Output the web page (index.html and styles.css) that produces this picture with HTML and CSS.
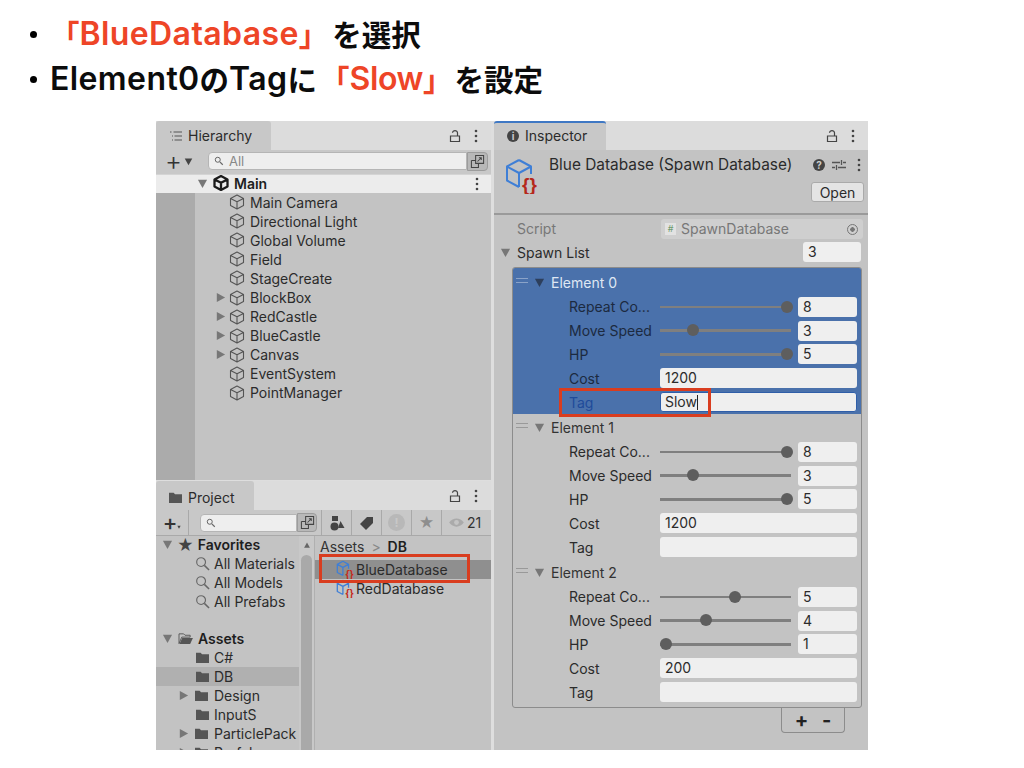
FILE: index.html
```html
<!DOCTYPE html>
<html lang="ja">
<head>
<meta charset="utf-8">
<title>Spawn Database</title>
<link rel="stylesheet" href="styles.css">
</head>
<body>
<svg class="defs" width="0" height="0" aria-hidden="true">
  <symbol id="cube" viewBox="0 0 16 16"><path d="M8 1 L14.5 4.4 V11.6 L8 15 L1.5 11.6 V4.4 Z M1.5 4.4 L8 7.8 L14.5 4.4 M8 7.8 V15" fill="none" stroke="currentColor" stroke-width="1.1" stroke-linejoin="round"/></symbol>
  <symbol id="cubebold" viewBox="0 0 16 16"><path d="M8 1 L14.5 4.4 V11.6 L8 15 L1.5 11.6 V4.4 Z M1.5 4.4 L8 7.8 L14.5 4.4 M8 7.8 V15" fill="none" stroke="currentColor" stroke-width="2.3" stroke-linejoin="round"/></symbol>
  <symbol id="folder" viewBox="0 0 16 14"><path d="M1 2 H6 L7.5 3.5 H15 V13 H1 Z" fill="currentColor"/></symbol>
  <symbol id="folderopen" viewBox="0 0 16 14"><path d="M1 2 H6 L7.5 3.5 H13 V5.5 H4 L1 12.5 Z" fill="none" stroke="currentColor"/><path d="M4.5 6.5 H16 L13 13 H1.5 Z" fill="currentColor"/></symbol>
  <symbol id="search" viewBox="0 0 16 16"><circle cx="6.5" cy="6.5" r="4.7" fill="none" stroke="currentColor" stroke-width="1.2"/><path d="M10 10 L15 15" stroke="currentColor" stroke-width="1.6"/></symbol>
  <symbol id="lock" viewBox="0 0 12 14"><path d="M1.5 7 H10.5 V12.5 H1.5 Z M8.5 7 V3.8 C8.5 1 3.5 1 3.5 3.8" fill="none" stroke="currentColor" stroke-width="1.2"/></symbol>
  <symbol id="dots" viewBox="0 0 4 14"><circle cx="2" cy="2" r="1.3" fill="currentColor"/><circle cx="2" cy="7" r="1.3" fill="currentColor"/><circle cx="2" cy="12" r="1.3" fill="currentColor"/></symbol>
  <symbol id="down" viewBox="0 0 12 12"><path d="M1 2 H11 L6 11 Z" fill="currentColor"/></symbol>
  <symbol id="right" viewBox="0 0 12 12"><path d="M2 1 L11 6 L2 11 Z" fill="currentColor"/></symbol>
  <symbol id="popout" viewBox="0 0 16 16"><path d="M6 1.5 H14.5 V10 H6 Z M1.5 7 H6 M1.5 7 V14.5 H9 V10 M8 8 L12 4 M9.5 4 H12 V6.5" fill="none" stroke="currentColor" stroke-width="1.1"/></symbol>
  <symbol id="minisearch" viewBox="0 0 12 12"><circle cx="4.5" cy="4.5" r="3" fill="none" stroke="currentColor" stroke-width="1.2"/><path d="M7 7 L10.5 10.5" stroke="currentColor" stroke-width="1.4"/></symbol>
  <symbol id="assetcube" viewBox="0 0 22 22"><path d="M8 1.5 L14.5 5 V10 M8 18 L1.5 14.5 V5 L8 1.5 M1.5 5 L8 8.6 L14.5 5 M8 8.6 V18" fill="none" stroke="#3f7fd6" stroke-width="1.5" stroke-linejoin="round"/></symbol>
</svg>

<ul class="bullets">
  <li class="bullet-first"><span class="accent"><span class="ja">「</span>BlueDatabase<span class="ja">」</span></span><span class="ja ja-after">を選択</span></li>
  <li class="bullet-second">Element0<span class="ja">の</span>Tag<span class="ja">に</span><span class="accent accent-slow"><span class="ja">「</span><span class="slow">Slow</span><span class="ja">」</span></span><span class="ja ja-set">を設定</span></li>
</ul>

<main class="window">
  <div class="col-left">
    <section class="pane hierarchy">
      <header class="tabstrip">
        <div class="tab tab-hier">
          <svg class="ic-list" viewBox="0 0 14 10"><path d="M1 1 H2.5 M4.5 1 H13 M3 5 H4 M5.5 5 H13 M3 9 H4 M5.5 9 H13" stroke="#555" fill="none"/></svg>
          <span>Hierarchy</span>
        </div>
        <div class="tab-actions"><svg class="ic-lock"><use href="#lock"/></svg><svg class="ic-dots"><use href="#dots"/></svg></div>
      </header>
      <div class="toolbar hier-toolbar">
        <span class="plus">+</span><svg class="ic-caret"><use href="#down"/></svg>
        <div class="searchbox"><svg class="ic-mini"><use href="#minisearch"/></svg><span class="search-text">All</span></div>
        <div class="popbtn"><svg class="ic-pop"><use href="#popout"/></svg></div>
      </div>
      <div class="scene-row">
        <svg class="arrow"><use href="#down"/></svg>
        <svg class="ic-cube ic-dark"><use href="#cubebold"/></svg>
        <b>Main</b>
        <svg class="ic-dots scene-dots"><use href="#dots"/></svg>
      </div>
      <div class="hier-body">
        <div class="gutter"></div>
        <ul class="hier-list">
          <li><svg class="ic-cube"><use href="#cube"/></svg>Main Camera</li>
          <li><svg class="ic-cube"><use href="#cube"/></svg>Directional Light</li>
          <li><svg class="ic-cube"><use href="#cube"/></svg>Global Volume</li>
          <li><svg class="ic-cube"><use href="#cube"/></svg>Field</li>
          <li><svg class="ic-cube"><use href="#cube"/></svg>StageCreate</li>
          <li class="has-kids"><svg class="arrow"><use href="#right"/></svg><svg class="ic-cube"><use href="#cube"/></svg>BlockBox</li>
          <li class="has-kids"><svg class="arrow"><use href="#right"/></svg><svg class="ic-cube"><use href="#cube"/></svg>RedCastle</li>
          <li class="has-kids"><svg class="arrow"><use href="#right"/></svg><svg class="ic-cube"><use href="#cube"/></svg>BlueCastle</li>
          <li class="has-kids"><svg class="arrow"><use href="#right"/></svg><svg class="ic-cube"><use href="#cube"/></svg>Canvas</li>
          <li><svg class="ic-cube"><use href="#cube"/></svg>EventSystem</li>
          <li><svg class="ic-cube"><use href="#cube"/></svg>PointManager</li>
        </ul>
      </div>
    </section>

    <section class="pane project">
      <header class="tabstrip">
        <div class="tab tab-proj"><svg class="ic-folder"><use href="#folder"/></svg><span>Project</span></div>
        <div class="tab-actions"><svg class="ic-lock"><use href="#lock"/></svg><svg class="ic-dots"><use href="#dots"/></svg></div>
      </header>
      <div class="toolbar proj-toolbar">
        <div class="tb-cell tb-plus"><span class="plus plus-small">+</span><svg class="ic-tiny"><use href="#down"/></svg></div>
        <div class="tb-search">
          <div class="searchbox"><svg class="ic-mini"><use href="#minisearch"/></svg></div>
          <div class="popbtn"><svg class="ic-pop"><use href="#popout"/></svg></div>
        </div>
        <div class="tb-cell"><svg class="ic-shapes" viewBox="0 0 16 16"><path d="M3 1 H9 V6 H3 Z" fill="#444"/><circle cx="5.5" cy="11.5" r="4" fill="#444"/><path d="M11.5 6 L15.5 13 H9 Z" fill="#444"/></svg></div>
        <div class="tb-cell"><svg class="ic-tag" viewBox="0 0 16 16"><path d="M1 9 L8 2 H14 V8 L7 15 Z" fill="#444"/></svg></div>
        <div class="tb-cell"><span class="warn">!</span></div>
        <div class="tb-cell"><span class="star">★</span></div>
        <div class="tb-count"><svg class="ic-eye" viewBox="0 0 18 12"><path d="M1 6 C5 0 13 0 17 6 C13 12 5 12 1 6 Z" fill="#aaa"/><circle cx="9" cy="6" r="2.6" fill="#c4c4c4"/></svg><span>21</span></div>
      </div>
      <div class="proj-body">
        <nav class="tree">
          <div class="tree-row lvl0"><svg class="arrow"><use href="#down"/></svg><span class="star star-dark">★</span><b>Favorites</b></div>
          <div class="tree-row lvl1"><svg class="ic-search"><use href="#search"/></svg>All Materials</div>
          <div class="tree-row lvl1"><svg class="ic-search"><use href="#search"/></svg>All Models</div>
          <div class="tree-row lvl1"><svg class="ic-search"><use href="#search"/></svg>All Prefabs</div>
          <div class="tree-row tree-gap"></div>
          <div class="tree-row lvl0"><svg class="arrow"><use href="#down"/></svg><svg class="ic-folder"><use href="#folderopen"/></svg><b>Assets</b></div>
          <div class="tree-row lvl1"><svg class="ic-folder"><use href="#folder"/></svg>C#</div>
          <div class="tree-row lvl1 selected"><svg class="ic-folder"><use href="#folder"/></svg>DB</div>
          <div class="tree-row lvl1 kids"><svg class="arrow"><use href="#right"/></svg><svg class="ic-folder"><use href="#folder"/></svg>Design</div>
          <div class="tree-row lvl1"><svg class="ic-folder"><use href="#folder"/></svg>InputS</div>
          <div class="tree-row lvl1 kids"><svg class="arrow"><use href="#right"/></svg><svg class="ic-folder"><use href="#folder"/></svg>ParticlePack</div>
          <div class="tree-row lvl1 kids"><svg class="arrow"><use href="#right"/></svg><svg class="ic-folder"><use href="#folder"/></svg>Prefabs</div>
        </nav>
        <div class="scrollbar"><svg class="sb-up"><use href="#down"/></svg><div class="sb-thumb"></div></div>
        <div class="files">
          <div class="crumbs">Assets <span class="crumb-sep">&gt;</span> <b>DB</b></div>
          <div class="file file-selected"><svg class="ic-asset" viewBox="0 0 22 22"><use href="#assetcube"/><text class="braces" x="11" y="21">{}</text></svg>BlueDatabase</div>
          <div class="file"><svg class="ic-asset" viewBox="0 0 22 22"><use href="#assetcube"/><text class="braces" x="11" y="21">{}</text></svg>RedDatabase</div>
          <div class="callout callout-file"></div>
        </div>
      </div>
    </section>
  </div>

  <section class="pane inspector">
    <header class="tabstrip">
      <div class="tab tab-insp"><span class="info">i</span><span>Inspector</span></div>
      <div class="tab-actions"><svg class="ic-lock"><use href="#lock"/></svg><svg class="ic-dots"><use href="#dots"/></svg></div>
    </header>
    <div class="insp-head">
      <svg class="big-asset" viewBox="0 0 38 36"><path d="M14 2 L26 8.5 V16 M14 29 L2 22.5 V8.5 L14 2 M2 8.5 L14 15 L26 8.5 M14 15 V29" fill="none" stroke="#3f7fd6" stroke-width="2" stroke-linejoin="round"/><text class="braces-big" x="17" y="33">{}</text></svg>
      <div class="insp-title">Blue Database (Spawn Database)</div>
      <div class="insp-side">
        <div class="insp-icons">
          <span class="help">?</span>
          <svg class="ic-sliders" viewBox="0 0 14 12"><path d="M0 3.5 H8 M11 3.5 H14 M0 8.5 H3 M6 8.5 H14 M9.5 1 V6 M4.5 6 V11" stroke="#555" stroke-width="1.3" fill="none"/></svg>
          <svg class="ic-dots ic-dots-head"><use href="#dots"/></svg>
        </div>
        <div class="open-btn">Open</div>
      </div>
    </div>
    <div class="prop-script">
      <span class="lbl-script">Script</span>
      <div class="script-field"><span class="hash">#</span>SpawnDatabase<span class="target"></span></div>
    </div>
    <div class="prop-list">
      <svg class="arrow"><use href="#down"/></svg><span class="lbl-list">Spawn List</span>
      <div class="field field-size">3</div>
    </div>
    <div class="listbox">
      <div class="element element-active">
        <div class="el-head"><span class="grip"></span><svg class="arrow"><use href="#down"/></svg>Element 0</div>
        <div class="row"><span class="lbl">Repeat Co...</span><div class="slider"><i class="thumb" style="left:100%"></i></div><div class="field num">8</div></div>
        <div class="row"><span class="lbl">Move Speed</span><div class="slider"><i class="thumb" style="left:28.3%"></i></div><div class="field num">3</div></div>
        <div class="row"><span class="lbl">HP</span><div class="slider"><i class="thumb" style="left:100%"></i></div><div class="field num">5</div></div>
        <div class="row"><span class="lbl">Cost</span><div class="field wide">1200</div></div>
        <div class="row"><span class="lbl lbl-focus">Tag</span><div class="field wide field-focus">Slow<i class="caret"></i></div></div>
        <div class="callout callout-tag"></div>
      </div>
      <div class="element">
        <div class="el-head"><span class="grip"></span><svg class="arrow"><use href="#down"/></svg>Element 1</div>
        <div class="row"><span class="lbl">Repeat Co...</span><div class="slider"><i class="thumb" style="left:100%"></i></div><div class="field num">8</div></div>
        <div class="row"><span class="lbl">Move Speed</span><div class="slider"><i class="thumb" style="left:28.3%"></i></div><div class="field num">3</div></div>
        <div class="row"><span class="lbl">HP</span><div class="slider"><i class="thumb" style="left:100%"></i></div><div class="field num">5</div></div>
        <div class="row"><span class="lbl">Cost</span><div class="field wide">1200</div></div>
        <div class="row"><span class="lbl">Tag</span><div class="field wide"></div></div>
      </div>
      <div class="element">
        <div class="el-head"><span class="grip"></span><svg class="arrow"><use href="#down"/></svg>Element 2</div>
        <div class="row"><span class="lbl">Repeat Co...</span><div class="slider"><i class="thumb" style="left:60.3%"></i></div><div class="field num">5</div></div>
        <div class="row"><span class="lbl">Move Speed</span><div class="slider"><i class="thumb" style="left:38.2%"></i></div><div class="field num">4</div></div>
        <div class="row"><span class="lbl">HP</span><div class="slider"><i class="thumb" style="left:7.6%"></i></div><div class="field num">1</div></div>
        <div class="row"><span class="lbl">Cost</span><div class="field wide">200</div></div>
        <div class="row"><span class="lbl">Tag</span><div class="field wide"></div></div>
      </div>
    </div>
    <div class="list-foot"><div class="footer-btns"><span>+</span><span>-</span></div></div>
  </section>
</main>
</body>
</html>
```
FILE: styles.css
```css
* { box-sizing: border-box; }
html, body { margin: 0; padding: 0; background: #fff; }
body { width: 1024px; height: 768px; overflow: hidden; font-family: Inter, "Noto Sans CJK JP", sans-serif; font-size: 14px; color: #2b2b2b; }
.defs { position: absolute; }
ul { list-style: none; margin: 0; padding: 0; }
svg { display: block; flex: none; }
b { font-weight: 600; color: #1e1e1e; }

.bullets { height: 121px; padding: 11px 0 0 30px; font-family: Inter, "Noto Sans CJK JP", sans-serif; font-size: 32px; font-weight: 600; color: #0c0c0c; letter-spacing: 0.4px; }
.bullets li { height: 45px; line-height: 45px; white-space: nowrap; display: flex; align-items: center; }
.bullets li::before { content: ""; width: 7px; height: 7px; border-radius: 50%; background: #000; flex: none; margin: 2px 13px 0 0; }
.ja { font-family: "Noto Sans CJK JP", sans-serif; font-size: 29.5px; font-weight: 700; letter-spacing: 0; }
.ja-after { margin-left: 4px; }
.ja-set { margin-left: 2px; }
.slow { letter-spacing: -0.4px; }
.accent { color: #ee4527; display: flex; align-items: center; }
.accent-slow { margin-left: 3px; }

.window { width: 712px; height: 629px; margin-left: 156px; display: flex; background: #dedede; }
.col-left { width: 335px; display: flex; flex-direction: column; gap: 1px; margin-right: 3px; }
.pane { background: #c3c3c3; overflow: hidden; }
.hierarchy { height: 359px; }
.project { flex: 1; position: relative; }
.inspector { width: 374px; position: relative; }

.tabstrip { height: 29px; background: #dcdcdc; display: flex; justify-content: space-between; }
.tab { background: #c8c8c8; display: flex; align-items: center; border-radius: 3px 3px 0 0; }
.tab-hier { width: 115px; padding-left: 13px; gap: 5px; }
.tab-proj { width: 98px; padding: 2px 0 0 12px; gap: 5px; height: 30px; }
.tab-insp { width: 112px; padding: 0 0 2px 13px; gap: 6px; border-top: 2px solid #3f78c4; }
.info { width: 12px; height: 12px; border-radius: 50%; background: #444; color: #ccc; font-size: 10px; font-weight: 700; line-height: 12px; text-align: center; }
.ic-list { width: 14px; height: 10px; }
.tab-actions { display: flex; align-items: center; gap: 13px; padding-right: 13px; color: #444; }
.ic-lock { width: 12px; height: 14px; color: #444; }
.ic-dots { width: 4px; height: 14px; color: #444; }

.toolbar { height: 24px; background: #c8c8c8; display: flex; align-items: center; padding-left: 9px; position: relative; }
.hier-toolbar { padding-bottom: 2px; }
.plus { font-size: 26px; line-height: 20px; font-weight: 300; color: #333; }
.ic-caret { width: 9px; height: 9px; color: #444; margin: 1px 15px 0 2px; }
.ic-tiny { width: 4px; height: 4px; color: #444; margin-top: 10px; }
.searchbox { flex: none; width: 259px; height: 18px; background: #eeeeee; border: 1px solid #b5b5b5; border-radius: 4px 0 0 4px; display: flex; align-items: center; gap: 5px; padding-left: 5px; color: #888; font-size: 13px; }
.ic-mini { width: 10px; height: 10px; color: #666; }
.popbtn { width: 21px; height: 19px; background: #b8b8b8; border: 1px solid #9c9c9c; border-radius: 0 4px 4px 0; display: flex; align-items: center; justify-content: center; color: #444; }
.ic-pop { width: 15px; height: 15px; }

.scene-row { height: 19px; background: #ececec; display: flex; align-items: center; padding: 0 0 1px 41px; position: relative; box-shadow: inset 0 1px 0 #d4d4d4; }
.arrow { width: 11px; height: 11px; color: #777; }
.scene-row .ic-cube { margin-left: 5px; margin-right: 5px; }
.ic-cube { width: 16px; height: 16px; color: #555; }
.ic-dark { color: #1a1a1a; }
.scene-dots { position: absolute; right: 12px; top: 3px; }
.hier-body { display: flex; height: 287px; }
.gutter { width: 39px; background: #ababab; }
.hier-list li { height: 19.1px; display: flex; align-items: center; gap: 5px; padding: 0 0 1px 34px; white-space: nowrap; }
.hier-list li.has-kids { padding-left: 20px; gap: 3px; }
.hier-list li.has-kids .ic-cube { margin-right: 2px; }

.proj-toolbar { height: 26px; padding-left: 0; border-bottom: 1px solid #a9a9a9; }
.tb-cell { width: 30px; height: 25px; display: flex; align-items: center; justify-content: center; border-right: 1px solid #a9a9a9; }
.tb-plus { width: 33px; padding-bottom: 2px; }
.plus-small { font-size: 22px; font-weight: 500; }
.tb-search { display: flex; align-items: center; padding: 0 4px 0 11px; height: 25px; border-right: 1px solid #a9a9a9; }
.proj-toolbar .searchbox { width: 97px; }
.proj-toolbar .popbtn { width: 20px; }
.ic-shapes, .ic-tag { width: 16px; height: 16px; }
.warn { width: 17px; height: 17px; border-radius: 50%; background: #b8b8b8; color: #c8c8c8; font-size: 12px; font-weight: 700; text-align: center; line-height: 17px; }
.star { font-size: 15px; color: #8e8e8e; line-height: 16px; }
.star-dark { color: #444; margin-left: 3px; margin-right: 4px; font-size: 16px; }
.tb-count { display: flex; align-items: center; gap: 2px; padding-left: 6px; font-size: 14px; color: #333; }
.ic-eye { width: 17px; height: 11px; }
.proj-body { display: flex; height: 238px; position: relative; }
.tree { width: 143px; overflow: hidden; margin-top: -1px; }
.tree-row { height: 19px; display: flex; align-items: center; white-space: nowrap; position: relative; }
.tree-gap { height: 18px; }
.tree-row.lvl0 { padding-left: 6px; }
.tree-row.lvl0 .arrow { margin-right: 1px; }
.tree-row.lvl0 .ic-folder { margin-left: 4px; margin-right: 5px; }
.tree-row.lvl1 { padding-left: 39px; gap: 4px; }
.tree-row.lvl1.kids { padding-left: 22px; gap: 4px; }
.tree-row.kids .arrow { margin-right: 1px; }
.tree-row.kids .ic-folder { margin-right: 1px; }
.tree-row.selected { background: #b0b0b0; }
.ic-search { width: 15px; height: 15px; color: #666; }
.ic-folder { width: 15px; height: 13px; color: #555; }
.scrollbar { width: 16px; background: #c8c8c8; position: relative; border-right: 1px solid #b0b0b0; }
.sb-up { width: 8px; height: 7px; color: #666; transform: scaleY(-1); margin: 6px auto 0; }
.sb-thumb { position: absolute; left: 2px; right: 2px; top: 19px; bottom: 0; background: #a9a9a9; border-radius: 6px 6px 0 0; }
.files { flex: 1; position: relative; }
.crumbs { height: 24px; padding: 1px 0 0 5px; line-height: 19px; color: #333; }
.crumb-sep { color: #888; margin: 0 3px; }
.file { height: 19px; display: flex; align-items: center; padding-left: 21px; gap: 1px; white-space: nowrap; }
.file-selected { background: #8f8f8f; }
.ic-asset { width: 19px; height: 19px; }
.braces { font: 700 12px "Liberation Sans", sans-serif; fill: #c52a1c; }
.braces-big { font: 700 19px "Liberation Sans", sans-serif; fill: #b5281c; }

.insp-head { height: 65px; display: flex; border-bottom: 2px solid #9a9a9a; position: relative; }
.big-asset { width: 38px; height: 36px; margin: 8px 0 0 11px; }
.insp-title { margin: 7px 0 0 6px; width: 260px; white-space: nowrap; line-height: 16px; font-size: 15.4px; }
.insp-side { flex: 1; display: flex; flex-direction: column; align-items: flex-end; padding: 7px 4px 0 0; }
.insp-icons { display: flex; align-items: center; gap: 7px; height: 16px; padding-right: 3px; }
.ic-dots-head { margin-left: 4px; }
.help { width: 12px; height: 12px; border-radius: 50%; background: #444; color: #ccc; font-size: 10px; font-weight: 700; line-height: 12px; text-align: center; }
.ic-sliders { width: 14px; height: 12px; }
.open-btn { margin-top: 9px; width: 53px; height: 20px; background: #e4e4e4; border: 1px solid #aaa; border-radius: 3px; text-align: center; line-height: 19px; }

.prop-script { height: 24px; display: flex; align-items: center; padding: 3px 5px 0 23px; }
.lbl-script { width: 144px; color: #777; }
.script-field { width: 202px; height: 20px; background: #cfcfcf; border-radius: 3px; display: flex; align-items: center; color: #777; padding-left: 4px; position: relative; line-height: 20px; }
.hash { width: 11px; height: 12px; background: #e2e2e2; color: #6d9a6d; font-size: 9px; line-height: 12px; text-align: center; margin-right: 5px; }
.target { position: absolute; right: 5px; top: 5px; width: 11px; height: 11px; border: 1px solid #777; border-radius: 50%; background: radial-gradient(circle, #777 0 2px, transparent 2.5px); }
.prop-list { height: 26px; display: flex; align-items: center; padding-left: 6px; position: relative; }
.lbl-list { margin-left: 6px; flex: 1; }
.field { background: #efefef; border-radius: 3px; height: 20px; line-height: 20px; padding-left: 5px; white-space: nowrap; color: #2b2b2b; }
.field-size { width: 58px; margin-right: 7px; height: 20px; }
.listbox { width: 350px; height: 441px; margin: 2px 0 0 18px; border: 1px solid #8c8c8c; border-radius: 3px; overflow: hidden; position: relative; z-index: 0; }
.element { height: 145px; position: relative; }
.element-active { height: 146px; padding-top: 1px; background: #4a71ab; color: #1d2a3e; }
.el-head { height: 26px; display: flex; align-items: center; padding-left: 3px; color: #333; }
.el-head .arrow { margin-right: 6px; }
.element-active .el-head { color: #dfe7f3; }
.element-active .el-head .arrow { color: #2d3f5c; }
.grip { width: 12px; height: 5px; border-top: 1px solid #999; border-bottom: 1px solid #999; margin: -3px 6px 0 0; }
.element-active .grip { border-color: #8ba3c8; }
.row { height: 23.8px; display: flex; align-items: center; padding-left: 56px; white-space: nowrap; }
.element-active .row { color: #1c2a40; }
.lbl { width: 91px; flex: none; }
.lbl-focus { color: #1f4b9a; }
.slider { width: 131px; height: 2.5px; background: #7f7f7f; position: relative; margin-right: 7px; flex: none; }
.thumb { position: absolute; top: -5px; width: 12px; height: 12px; border-radius: 50%; background: #5e5e5e; margin-left: -4px; transform: translateX(-50%); }
.num { width: 59px; }
.wide { width: 197px; }
.field-focus { border: 1px solid #2f5ea8; line-height: 18px; padding-left: 4px; width: 197px; }
.caret { display: inline-block; width: 1px; height: 15px; background: #222; vertical-align: -3px; }

.list-foot { display: flex; justify-content: flex-end; padding-right: 23px; }
.footer-btns { width: 64px; height: 25px; border: 1px solid #8c8c8c; border-top: 0; border-radius: 0 0 4px 4px; display: flex; justify-content: space-around; font-size: 20px; font-weight: 700; line-height: 25px; color: #222; padding: 0 6px; }

.callout { position: absolute; border: 3px solid #d93d1f; pointer-events: none; z-index: 2; }
.callout-file { left: 4px; top: 18px; width: 151px; height: 29px; }
.callout-tag { left: 46px; top: 120px; width: 152px; height: 29px; }
```
